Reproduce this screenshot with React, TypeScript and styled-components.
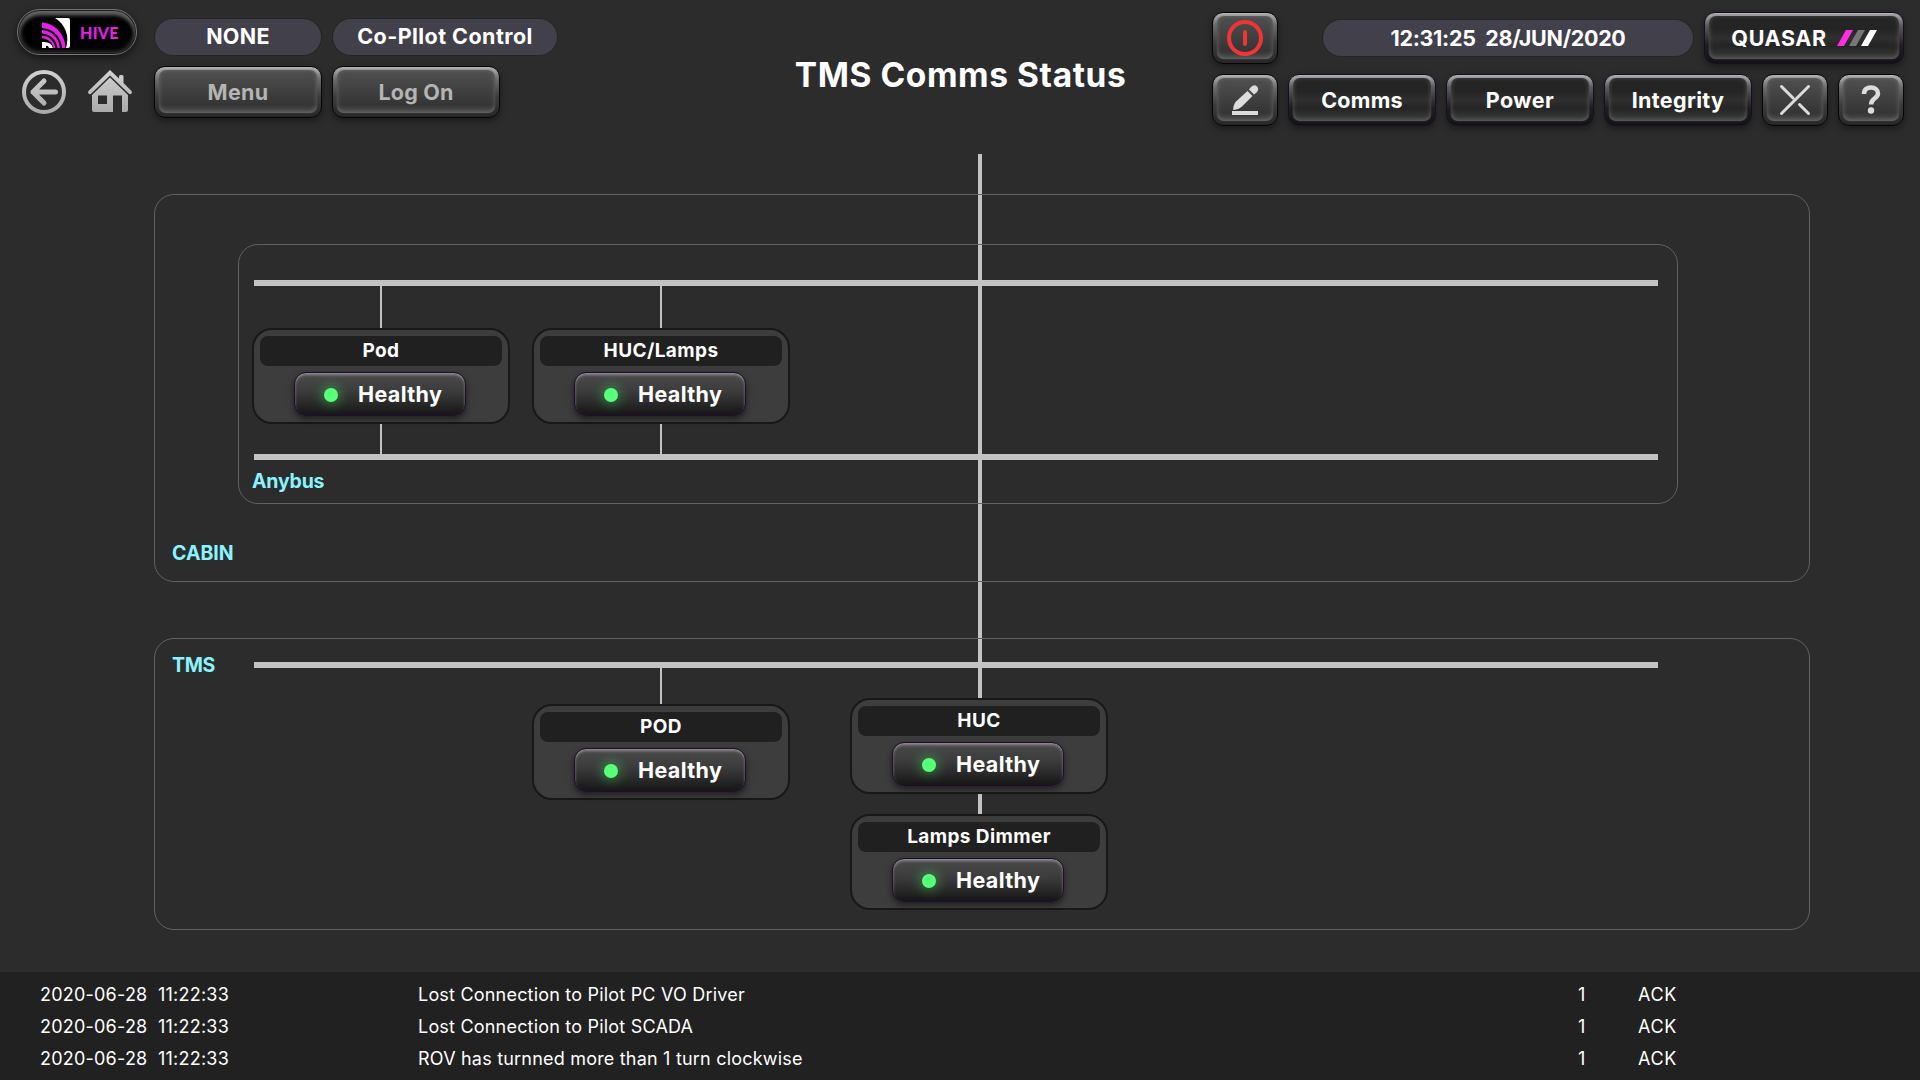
import React from "react";
import styled, { createGlobalStyle, css } from "styled-components";

const GlobalStyle = createGlobalStyle`
  *, *::before, *::after { box-sizing: border-box; }
  body { margin: 0; background: #2c2c2c; }
  button { font: inherit; }
`;

const Screen = styled.div`
  width: 1920px;
  height: 1080px;
  overflow: hidden;
  position: relative;
  isolation: isolate;
  display: flex;
  flex-direction: column;
  background: #2c2c2c;
  color: #fff;
  font-family: Inter, "Liberation Sans", sans-serif;
`;

/* ---------- header ---------- */

const Header = styled.header`
  height: 154px;
  display: grid;
  grid-template-columns: 1fr auto 1fr;
  padding: 9px 16px 0 17px;
`;

const HeaderLeft = styled.div`
  display: flex;
  gap: 17px;
`;

const BrandColumn = styled.div`
  width: 120px;
  display: flex;
  flex-direction: column;
  gap: 15px;
`;

const HivePill = styled.div`
  height: 46px;
  border-radius: 23px;
  border: 1px solid #777;
  background: #000;
  box-shadow: inset 0 0 0 1px #1c1c1c, inset 0 5px 4px #666, inset 0 0 5px 2px #444,
    0 3px 8px rgba(0, 0, 0, 0.55);
  display: flex;
  align-items: center;
  padding: 1px 0 0 23px;
  gap: 9px;
`;

const HiveName = styled.span`
  font: 900 16px/20px Lato, sans-serif;
  letter-spacing: 0.3px;
  color: #e61ee6;
`;

const NavIcons = styled.div`
  display: flex;
  gap: 22px;
  padding-left: 5px;
`;

const StatusGrid = styled.div`
  display: flex;
  flex-direction: column;
  gap: 11px;
  padding-top: 10px;
`;

const HeaderRow = styled.div<{ $gap: number; $indent?: number }>`
  display: flex;
  align-items: center;
  gap: ${(p) => p.$gap}px;
  padding-left: ${(p) => p.$indent ?? 0}px;
`;

const Pill = styled.div<{ $w: number; $tracking?: number }>`
  width: ${(p) => p.$w}px;
  height: 36px;
  border-radius: 18px;
  background: #42404a;
  box-shadow: 0 0 0 1px rgba(30, 30, 30, 0.5);
  display: flex;
  align-items: center;
  justify-content: center;
  padding-bottom: 2px;
  font-size: 21.5px;
  font-weight: 700;
  letter-spacing: ${(p) => p.$tracking ?? 0}px;
  white-space: pre;
`;

const ClockPill = styled(Pill)`
  margin-left: 34px;
  padding-bottom: 0;
`;

const Title = styled.h1`
  margin: 0;
  padding-top: 46px;
  font-size: 33.5px;
  line-height: 40px;
  font-weight: 700;
  letter-spacing: 0.58px;
`;

const HeaderRight = styled.div`
  display: flex;
  flex-direction: column;
  align-items: flex-end;
  gap: 10px;
  padding-top: 3px;
`;

const greyFace = css`
  border-color: #050505;
  background: linear-gradient(#b4b4b4 0, #a0a0a0 4px, #6c6c6c 12px, #3c3c3c 30px, #262626 100%);
  color: #b4b4b4;
`;
const darkFace = css`
  border-color: #1d0a2c;
  background: linear-gradient(#b0b0b0 0, #9a9a9a 4px, #5c5c5c 12px, #1e1e1e 32px, #131313 100%);
  color: #fff;
`;

const Bevel = styled.button<{ $w: number; $dark?: boolean; $tracking?: number }>`
  width: ${(p) => p.$w}px;
  height: 52px;
  padding: 3px 4px 4px;
  border: 1px solid;
  border-radius: 11px;
  display: flex;
  ${(p) => (p.$dark ? darkFace : greyFace)}
  box-shadow: 0 3px 7px rgba(0, 0, 0, 0.4);
  font-size: 21.5px;
  font-weight: 700;
  letter-spacing: ${(p) => p.$tracking ?? 0}px;
`;

const BevelFace = styled.span<{ $dark?: boolean }>`
  flex: 1;
  border-radius: 7px;
  display: flex;
  align-items: center;
  justify-content: center;
  gap: 10px;
  background: ${(p) =>
    p.$dark
      ? "linear-gradient(#252525, #242424 30%, #2f2f2f 52%, #242424 70%, #3c3c3c)"
      : "linear-gradient(#505050, #353535 80%, #484848)"};
  box-shadow: inset 0 -1px 5px rgba(255, 255, 255, 0.22), 0 0 2px rgba(90, 90, 90, 0.7);
`;

/* ---------- network diagram ---------- */

const Trunk = styled.div`
  position: absolute;
  z-index: -1;
  left: 978px;
  top: 154px;
  width: 4px;
  height: 666px;
  background: #c3c3c3;
`;

const Diagram = styled.main`
  flex: 1;
  display: flex;
  flex-direction: column;
  gap: 56px;
  padding: 40px 110px 0 154px;
`;

const Zone = styled.section<{ $h: number }>`
  height: ${(p) => p.$h}px;
  border: 1px solid #616161;
  border-radius: 20px;
`;

const CabinZone = styled(Zone)`
  padding: 49px 0 0 83px;
`;

const AnybusZone = styled(Zone)`
  width: 1440px;
  padding: 35px 0 0 15px;
`;

const TmsZone = styled(Zone)`
  display: flex;
  padding: 23px 0 0 17px;
`;

const TmsBody = styled.div`
  width: 1404px;
`;

const Bus = styled.div`
  width: 1404px;
  height: 6px;
  background: #c3c3c3;
`;

const ZoneLabel = styled.div<{ $tracking?: number }>`
  font-size: 19.5px;
  line-height: 24px;
  font-weight: 700;
  color: #8af3ff;
  letter-spacing: ${(p) => p.$tracking ?? 0}px;
`;

const AnybusLabel = styled(ZoneLabel)`
  margin: 9px 0 0 -2px;
`;

const CabinLabel = styled(ZoneLabel)`
  margin: 37px 0 0 -66px;
`;

const TmsLabel = styled(ZoneLabel)`
  width: 82px;
  margin-top: -9px;
`;

const Columns = styled.div<{ $indent: number; $gap: number }>`
  display: flex;
  gap: ${(p) => p.$gap}px;
  margin-left: ${(p) => p.$indent}px;
`;

const Column = styled.div`
  display: flex;
  flex-direction: column;
  align-items: center;
`;

const Stem = styled.div<{ $h: number; $hidden?: boolean }>`
  width: 2px;
  height: ${(p) => p.$h}px;
  background: ${(p) => (p.$hidden ? "transparent" : "#c3c3c3")};
`;

const Node = styled.article`
  width: 258px;
  height: 96px;
  border: 2px solid #181818;
  border-radius: 20px;
  background: #3d3d3d;
  padding: 6px;
`;

const NodeName = styled.div`
  height: 30px;
  border-radius: 8px;
  background: #202020;
  display: flex;
  align-items: center;
  justify-content: center;
  padding-bottom: 1px;
  font-size: 19px;
  font-weight: 700;
  letter-spacing: 0.4px;
`;

const HealthButton = styled.button`
  width: 172px;
  height: 44px;
  margin: 6px 0 0 34px;
  padding: 0 0 1px 29px;
  border: 1px solid #230a35;
  border-radius: 12px;
  background: linear-gradient(#4a4a4a, #3d3d3d 40%, #2b2b2b 70%, #151515);
  box-shadow: inset 0 2px 3px rgba(255, 255, 255, 0.38), 0 3px 6px rgba(0, 0, 0, 0.5);
  display: flex;
  align-items: center;
  gap: 20px;
  color: #fff;
  font-size: 21.5px;
  font-weight: 700;
  letter-spacing: 0.38px;
`;

const Lamp = styled.i`
  width: 14px;
  height: 14px;
  margin-top: 3px;
  border-radius: 50%;
  background: #58ff78;
  box-shadow: 0 0 12px 3px rgba(60, 220, 90, 0.42);
`;

/* ---------- alarm list ---------- */

const AlarmList = styled.footer`
  height: 108px;
  background: #212121;
  padding: 6px 0 0 40px;
`;

const AlarmRow = styled.div`
  height: 32px;
  display: grid;
  grid-template-columns: 378px 1160px 60px auto;
  align-items: center;
  font-size: 18px;
  white-space: pre;
`;

const Cell = styled.span<{ $tracking?: number }>`
  letter-spacing: ${(p) => p.$tracking ?? 0}px;
`;

/* ---------- icons ---------- */

const HiveLogo = () => (
  <svg width="30" height="30" viewBox="0 0 30 30" fill="none">
    <path d="M14 0H27Q29 0 29 2V28Q29 30 27 30H25C29 18 24 6 14 0Z" fill="#fff" />
    <path d="M1 4.5C13 5 24.5 16 24.5 30H21C20 18 12 11 1 10Z" fill="#e61ee6" />
    <path d="M1 12C10 12.500 18 19 19 30H16.500C15 21 9 16 1 15.500Z" fill="#e61ee6" />
    <path d="M1 17.500C8 18 13 23 14.500 30H12.500C11 24 7 21 1 20Z" fill="#e61ee6" />
    <path d="M1 24Q10 23 12 30H8Q7 27 5 28V30H1Z" fill="#fff" />
  </svg>
);

const IconGradient = ({ id }: { id: string }) => (
  <linearGradient id={id} x1="0" y1="0" x2="0" y2="44" gradientUnits="userSpaceOnUse">
    <stop stopColor="#d2d2d2" />
    <stop offset="1" stopColor="#a8a8a8" />
  </linearGradient>
);

const BackIcon = () => (
  <svg width="44" height="44" viewBox="0 0 44 44" fill="none">
    <defs><IconGradient id="back" /></defs>
    <circle cx="22" cy="22" r="20" stroke="url(#back)" strokeWidth="4" />
    <path d="M33.500 22.010H11M22 11L11 22L22 33" stroke="url(#back)" strokeWidth="5" strokeLinecap="round" strokeLinejoin="round" />
  </svg>
);

const HomeIcon = () => (
  <svg width="44" height="44" viewBox="0 0 44 44" fill="none">
    <defs><IconGradient id="home" /></defs>
    <path d="M22 0L31 8.600V6.500Q31 5 32.500 5H34Q35.500 5 35.500 6.500V13L43.500 21Q44.500 22.500 43.300 23.800Q42 24.600 40.700 23.600L22 5.500L3.300 23.600Q2 24.600 0.700 23.800Q-0.500 22.500 0.500 21Z" fill="url(#home)" />
    <path fillRule="evenodd" d="M22 7.500L40 25V40Q40 42 38 42H34V25.500H25V42H6Q4 42 4 40V25ZM10 25.500V34H19V25.500Z" fill="url(#home)" />
  </svg>
);

const PowerIcon = () => (
  <svg width="36" height="36" viewBox="0 0 36 36" fill="none" stroke="#f23434">
    <circle cx="18" cy="18" r="16" strokeWidth="4" />
    <path d="M18 12V24" strokeWidth="4" strokeLinecap="round" />
  </svg>
);

const EditIcon = () => (
  <svg width="28" height="32" viewBox="0 0 28 32" fill="#dcdcdc">
    <path d="M16.500 7L21.500 12L11 22.500Q8 25.500 2 26Q2.500 20 5 17.500Z" />
    <path d="M18 5.500L20 3Q23 0 26 2.500Q28.500 5.500 25.500 8.500L23 10.500Z" />
    <path d="M1 27H27V31H1Z" />
  </svg>
);

const CrossIcon = () => (
  <svg width="32" height="32" viewBox="0 0 32 32" fill="none" stroke="#dcdcdc" strokeWidth="3" strokeLinecap="round">
    <path d="M29.500 2.500L2.500 29.500M2.500 2.500L14 14M20.500 20.500L29.500 29.500" />
  </svg>
);

const HelpIcon = () => (
  <svg width="20" height="30" viewBox="0 0 20 30" fill="none">
    <path d="M3 9C3 4.500 6 2.500 10 2.500C14 2.500 17 4.800 17 8.500C17 13.500 10 13 10 19.500" stroke="#dcdcdc" strokeWidth="4.500" />
    <circle cx="10" cy="25.500" r="3.200" fill="#dcdcdc" />
  </svg>
);

const QuasarMark = () => (
  <svg width="40" height="16" viewBox="0 0 40 16">
    <path d="M9 0H16L7 16H0Z" fill="#ff2fe0" />
    <path d="M21 0H28L19 16H12Z" fill="#777" />
    <path d="M33 0H40L31 16H24Z" fill="#fff" />
  </svg>
);

/* ---------- composition ---------- */

const DeviceNode = ({ name }: { name: string }) => (
  <Node>
    <NodeName>{name}</NodeName>
    <HealthButton><Lamp />Healthy</HealthButton>
  </Node>
);

type BtnProps = { w: number; dark?: boolean; tracking?: number; children: React.ReactNode };
const BevelButton = ({ w, dark, tracking, children }: BtnProps) => (
  <Bevel $w={w} $dark={dark} $tracking={tracking}>
    <BevelFace $dark={dark}>{children}</BevelFace>
  </Bevel>
);

const alarms = [
  { time: "2020-06-28  11:22:33", text: "Lost Connection to Pilot PC VO Driver", count: 1 },
  { time: "2020-06-28  11:22:33", text: "Lost Connection to Pilot SCADA", count: 1 },
  { time: "2020-06-28  11:22:33", text: "ROV has turnned more than 1 turn clockwise", count: 1 },
];

export default function App() {
  return (
    <Screen>
      <GlobalStyle />
      <Trunk />
      <Header>
        <HeaderLeft>
          <BrandColumn>
            <HivePill><HiveLogo /><HiveName>HIVE</HiveName></HivePill>
            <NavIcons><BackIcon /><HomeIcon /></NavIcons>
          </BrandColumn>
          <StatusGrid>
            <HeaderRow $gap={12} $indent={1}>
              <Pill $w={166} $tracking={0.3}>NONE</Pill>
              <Pill $w={224} $tracking={0.45}>Co-Pllot Control</Pill>
            </HeaderRow>
            <HeaderRow $gap={10}>
              <BevelButton w={168} tracking={0.3}>Menu</BevelButton>
              <BevelButton w={168} tracking={0.2}>Log On</BevelButton>
            </HeaderRow>
          </StatusGrid>
        </HeaderLeft>
        <Title>TMS Comms Status</Title>
        <HeaderRight>
          <HeaderRow $gap={11}>
            <BevelButton w={66}><PowerIcon /></BevelButton>
            <ClockPill $w={370} $tracking={-0.3}>12:31:25  28/JUN/2020</ClockPill>
            <BevelButton w={200} dark tracking={0.6}>QUASAR<QuasarMark /></BevelButton>
          </HeaderRow>
          <HeaderRow $gap={10}>
            <BevelButton w={66}><EditIcon /></BevelButton>
            <BevelButton w={148} dark tracking={0.25}>Comms</BevelButton>
            <BevelButton w={148} dark tracking={0.5}>Power</BevelButton>
            <BevelButton w={148} dark tracking={0.35}>Integrity</BevelButton>
            <BevelButton w={66}><CrossIcon /></BevelButton>
            <BevelButton w={66}><HelpIcon /></BevelButton>
          </HeaderRow>
        </HeaderRight>
      </Header>

      <Diagram>
        <CabinZone $h={388}>
          <AnybusZone $h={260}>
            <Bus />
            <Columns $indent={-2} $gap={22}>
              {["Pod", "HUC/Lamps"].map((name) => (
                <Column key={name}>
                  <Stem $h={42} />
                  <DeviceNode name={name} />
                  <Stem $h={30} />
                </Column>
              ))}
            </Columns>
            <Bus />
            <AnybusLabel $tracking={-0.2}>Anybus</AnybusLabel>
          </AnybusZone>
          <CabinLabel>CABIN</CabinLabel>
        </CabinZone>

        <TmsZone $h={292}>
          <TmsLabel $tracking={-0.3}>TMS</TmsLabel>
          <TmsBody>
            <Bus />
            <Columns $indent={278} $gap={60}>
              <Column>
                <Stem $h={36} />
                <DeviceNode name="POD" />
              </Column>
              <Column>
                <Stem $h={30} $hidden />
                <DeviceNode name="HUC" />
                <Stem $h={20} $hidden />
                <DeviceNode name="Lamps Dimmer" />
              </Column>
            </Columns>
          </TmsBody>
        </TmsZone>
      </Diagram>

      <AlarmList>
        {alarms.map((a) => (
          <AlarmRow key={a.text}>
            <Cell $tracking={0.22}>{a.time}</Cell>
            <Cell $tracking={0.2}>{a.text}</Cell>
            <Cell>{a.count}</Cell>
            <Cell $tracking={0.6}>ACK</Cell>
          </AlarmRow>
        ))}
      </AlarmList>
    </Screen>
  );
}
